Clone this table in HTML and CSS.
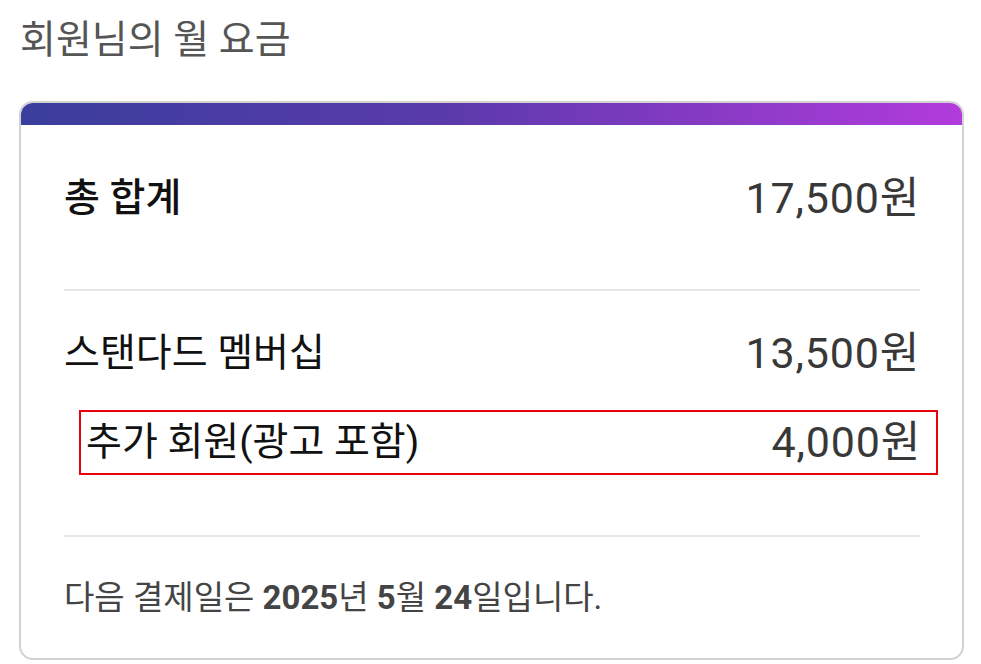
FILE: index.html
```html
<!DOCTYPE html>
<html lang="ko">
<head>
  <meta charset="utf-8">
  <title>회원님의 월 요금</title>
  <meta name="viewport" content="width=device-width, initial-scale=1">
  <link rel="stylesheet" href="styles.css">
</head>
<body>
  <h1 class="page-title">회원님의 월 요금</h1>

  <div class="bill-card">
    <div class="bill-bar"></div>

    <div class="bill-total">
      <span class="bill-label total-label">총 합계</span>
      <span class="bill-price">17,500원</span>
    </div>

    <div class="bill-items">
      <div class="bill-row">
        <span class="bill-label">스탠다드 멤버십</span>
        <span class="bill-price">13,500원</span>
      </div>
      <!-- highlighted extra member row -->
      <div class="bill-row bill-extra">
        <span class="bill-label">추가 회원(광고 포함)</span>
        <span class="bill-price">4,000원</span>
      </div>
    </div>

    <div class="bill-footer">
      다음 결제일은 <b>2025</b>년 <b>5</b>월 <b>24</b>일입니다.
    </div>
  </div>
</body>
</html>
```

FILE: styles.css
```css
body {
  margin: 0;
  padding: 0 17px 0 19px;
  font-family: Roboto, "Noto Sans CJK KR", sans-serif;
  background-color: #fff;
  color: #111;
}
.page-title {
  margin: 0;
  padding: 14px 0 0 1px;
  height: 101px;
  box-sizing: border-box;
  font-size: 39px;
  font-weight: 400;
  line-height: 52px;
  color: #555;
}
/* Card */
.bill-card {
  border: 2px solid #d2d2d2;
  border-radius: 14px;
  overflow: hidden;
  padding: 0 42px 38px 43px;
}
.bill-bar {
  height: 22px;
  margin: 0 -42px 0 -43px;
  background: linear-gradient(to right, #3a3e9c, #5a3aab 45%, #b23bdc);
}
.bill-total,
.bill-row {
  display: flex;
  justify-content: space-between;
  align-items: center;
  line-height: 60px;
}
.bill-total {
  padding: 43px 0 61px;
  border-bottom: 2px solid #e6e6e6;
}
.bill-label {
  font-size: 39px;
  color: #111;
}
.total-label {
  font-weight: 500;
}
.bill-price {
  font-size: 43px;
  letter-spacing: 0.8px;
  color: #383838;
}
.bill-items {
  padding: 32px 0 60px;
  border-bottom: 2px solid #e6e6e6;
}
.bill-extra {
  margin: 27px -18px 0 15px;
  padding: 0 15px 0 5px;
  line-height: 61px;
  border: 2px solid #e8000b;
}
.bill-footer {
  padding-top: 39px;
  font-size: 33px;
  line-height: 44px;
  color: #444;
}
.bill-footer b {
  font-weight: 700;
}
```
